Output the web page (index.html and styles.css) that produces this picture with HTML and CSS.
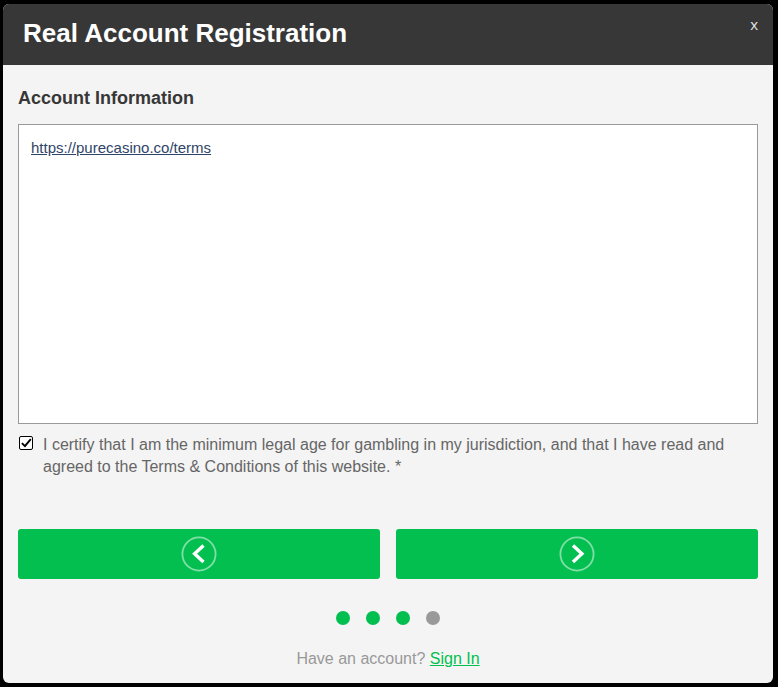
FILE: index.html
```html
<!DOCTYPE html>
<html lang="en">
<head>
<meta charset="utf-8">
<meta name="viewport" content="width=device-width, initial-scale=1">
<title>Real Account Registration</title>
<link rel="stylesheet" href="styles.css">
</head>
<body>
<main class="dialog">
  <header class="dialog-header">
    <h1 class="dialog-title">Real Account Registration</h1>
    <button class="close" type="button">x</button>
  </header>
  <form class="dialog-body">
    <h2 class="section-title">Account Information</h2>
    <div class="terms"><a class="terms-link" href="#terms">https://purecasino.co/terms</a></div>
    <div class="consent">
      <input class="consent-box" type="checkbox" id="consent" checked>
      <label class="consent-label" for="consent">I certify that I am the minimum legal age for gambling in my jurisdiction, and that I have read and agreed to the Terms &amp; Conditions of this website. *</label>
    </div>
    <div class="actions">
      <button class="nav-button" type="button" aria-label="Previous">
        <svg class="nav-icon" viewBox="0 0 36 36" aria-hidden="true"><circle class="ring" cx="18" cy="18" r="16.6"/><path class="chevron" d="M22.5 9.5 13.6 17.7 22.5 25.9"/></svg>
      </button>
      <button class="nav-button" type="button" aria-label="Next">
        <svg class="nav-icon" viewBox="0 0 36 36" aria-hidden="true"><circle class="ring" cx="18" cy="18" r="16.6"/><path class="chevron" d="M14 9.5 22.9 17.7 14 25.9"/></svg>
      </button>
    </div>
    <ol class="steps">
      <li class="step done"></li>
      <li class="step done"></li>
      <li class="step done"></li>
      <li class="step"></li>
    </ol>
    <p class="sign-in">Have an account? <a class="sign-in-link" href="#signin">Sign In</a></p>
  </form>
</main>
</body>
</html>
```
FILE: styles.css
```css
* {
  box-sizing: border-box;
}

body {
  margin: 0;
  padding: 4px 5px 4px 3px;
  background: #000;
  color: #666;
  font: 16px/22px "Liberation Sans", Arial, sans-serif;
}

.dialog {
  overflow: hidden;
  border-radius: 6px;
  background: #f4f4f4;
}

.dialog-header {
  display: flex;
  justify-content: space-between;
  align-items: flex-start;
  padding: 14px 15px 17px 20px;
  background: #373737;
  color: #fff;
}

.dialog-title {
  margin: 0;
  font-size: 26px;
  line-height: 30px;
}

.close {
  padding: 0;
  border: 0;
  background: none;
  color: #e4e4e4;
  font: 15px/12px "Open Sans", sans-serif;
}

.dialog-body {
  padding: 22px 15px 13px;
}

.section-title {
  margin: 0 0 15px;
  color: #373737;
  font-size: 18px;
  line-height: 22px;
}

.terms {
  min-height: 300px;
  padding: 12px;
  border: 1px solid #999;
  background: #fff;
  font-size: 15px;
}

.terms-link {
  color: #2f4468;
}

.consent {
  display: flex;
  gap: 10px;
  align-items: flex-start;
  margin-top: 10px;
  padding-left: 1px;
}

.consent-box {
  appearance: none;
  display: grid;
  flex: none;
  width: 14px;
  height: 14px;
  margin: 2px 0 0;
  border: 1px solid #000;
  border-radius: 2px;
  background: #fff;
}

.consent-box:checked::before {
  content: "";
  background: #000;
  clip-path: polygon(10% 56%, 22% 46%, 40% 64%, 84% 12%, 96% 22%, 42% 88%);
}

.actions {
  display: grid;
  grid-template-columns: 1fr 1fr;
  gap: 16px;
  margin-top: 51px;
}

.nav-button {
  display: flex;
  justify-content: center;
  align-items: center;
  height: 50px;
  padding: 0;
  border: 0;
  border-radius: 3px;
  background: #02bf50;
}

.nav-icon {
  width: 36px;
  height: 36px;
  fill: none;
}

.ring {
  stroke: #80dfa7;
  stroke-width: 1.8;
}

.chevron {
  stroke: #fff;
  stroke-width: 3.4;
}

.steps {
  display: flex;
  justify-content: center;
  gap: 16px;
  margin: 32px 0 23px;
  padding: 0;
  list-style: none;
}

.step {
  width: 14px;
  height: 14px;
  border-radius: 50%;
  background: #999;
}

.step.done {
  background: #02bf50;
}

.sign-in {
  margin: 0;
  color: #999;
  text-align: center;
}

.sign-in-link {
  color: #02bf50;
}
```
